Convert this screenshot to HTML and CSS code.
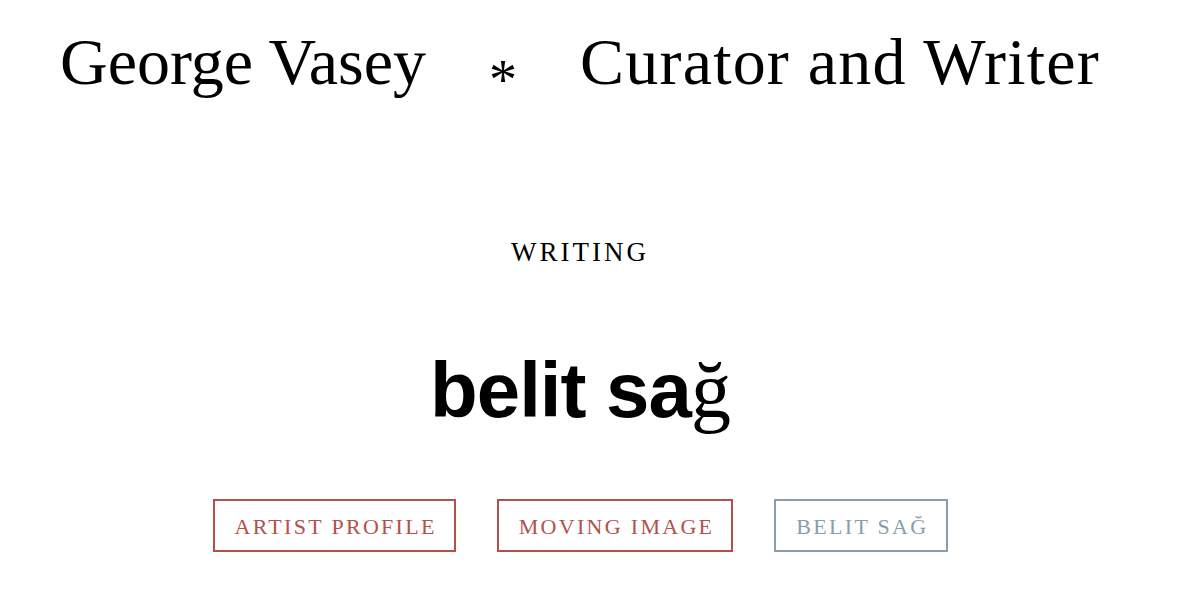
FILE: index.html
```html
<!DOCTYPE html>
<html lang="en">
<head>
<meta charset="utf-8">
<title>George Vasey – Writing – belit sağ</title>
<link rel="stylesheet" href="styles.css">
</head>
<body>
<div class="page">
  <header class="site-header">
    <span class="site-name">George Vasey</span>
    <span class="site-sep">*</span>
    <span class="site-role">Curator and Writer</span>
  </header>
  <main class="article">
    <div class="section-label">Writing</div>
    <h1 class="article-title">belit sa<span class="fallback">ğ</span></h1>
    <nav class="tags">
      <a class="tag tag-red" href="#">Artist Profile</a>
      <a class="tag tag-red" href="#">Moving Image</a>
      <a class="tag tag-grey" href="#">Belit Sağ</a>
    </nav>
  </main>
</div>
</body>
</html>
```
FILE: styles.css
```css
html, body {
  margin: 0;
  padding: 0;
  background: #ffffff;
}
body {
  font-family: "Liberation Serif", "Times New Roman", serif;
  color: #000;
}
.page {
  width: 1160px;
}
.site-header {
  display: flex;
  justify-content: center;
  align-items: baseline;
  gap: 63px;
  padding-top: 24px;
  font-size: 66px;
  line-height: 76px;
}
.site-role {
  letter-spacing: 1.2px;
}
.site-sep {
  font-size: 56px;
  transform: translateY(15px);
}
.article {
  display: flex;
  flex-direction: column;
  align-items: center;
}
.section-label {
  margin-top: 134px;
  text-transform: uppercase;
  font-size: 27px;
  letter-spacing: 3px;
  line-height: 30px;
}
.article-title {
  margin: 78px 0 0;
  font-family: "Liberation Sans", Arial, sans-serif;
  font-weight: bold;
  font-size: 78px;
  line-height: 90px;
  letter-spacing: -1px;
}
.article-title .fallback {
  font-family: "Liberation Serif", serif;
  font-weight: normal;
  font-size: 80px;
}
.tags {
  display: flex;
  gap: 41px;
  margin-top: 64px;
}
.tag {
  display: block;
  border: 2px solid;
  padding: 0 17px 0 20px;
  height: 49px;
  line-height: 51px;
  font-size: 22px;
  letter-spacing: 2.3px;
  text-transform: uppercase;
  text-decoration: none;
}
.tag-red {
  color: #b4504c;
  border-color: #b4504c;
}
.tag-grey {
  color: #8a9ea8;
  border-color: #8a9ea8;
}
```
